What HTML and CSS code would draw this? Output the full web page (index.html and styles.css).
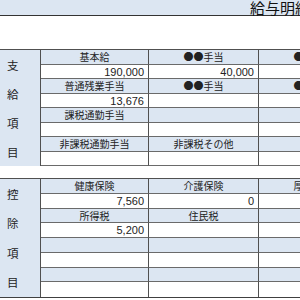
FILE: index.html
```html
<!DOCTYPE html>
<html lang="ja">
<head>
<meta charset="utf-8">
<link rel="stylesheet" href="styles.css">
</head>
<body>
<div class="sheet">
  <div class="titlebar">給与明細書</div>

  <section class="block pay">
    <div class="side"><span>支</span><span>給</span><span>項</span><span>目</span></div>
    <div class="grid">
      <div class="c h">基本給</div><div class="c h">●●手当</div><div class="c h">●●手当</div>
      <div class="c v">190,000</div><div class="c v">40,000</div><div class="c v"></div>
      <div class="c h">普通残業手当</div><div class="c h">●●手当</div><div class="c h">●●手当</div>
      <div class="c v">13,676</div><div class="c v"></div><div class="c v"></div>
      <div class="c h">課税通勤手当</div><div class="c h"></div><div class="c h"></div>
      <div class="c v"></div><div class="c v"></div><div class="c v"></div>
      <div class="c h">非課税通勤手当</div><div class="c h">非課税その他</div><div class="c h"></div>
      <div class="c v"></div><div class="c v"></div><div class="c v"></div>
    </div>
  </section>

  <section class="block deduct">
    <div class="side"><span>控</span><span>除</span><span>項</span><span>目</span></div>
    <div class="grid">
      <div class="c h">健康保険</div><div class="c h">介護保険</div><div class="c h">厚生年金</div>
      <div class="c v">7,560</div><div class="c v">0</div><div class="c v"></div>
      <div class="c h">所得税</div><div class="c h">住民税</div><div class="c h"></div>
      <div class="c v">5,200</div><div class="c v"></div><div class="c v"></div>
      <div class="c h"></div><div class="c h"></div><div class="c h"></div>
      <div class="c v"></div><div class="c v"></div><div class="c v"></div>
      <div class="c h"></div><div class="c h"></div><div class="c h"></div>
      <div class="c v"></div><div class="c v"></div><div class="c v"></div>
    </div>
  </section>
</div>
</body>
</html>
```

FILE: styles.css
```css
html, body {
  margin: 0;
  padding: 0;
  background: #ffffff;
  overflow: hidden;
}

.sheet {
  width: 420px;
  font-family: "Liberation Sans", "Noto Sans CJK JP", sans-serif;
  color: #222222;
}

.titlebar {
  height: 15px;
  background: #dce6f2;
  border-bottom: 1px solid #333333;
  padding-left: 250px;
  font-family: "Noto Sans CJK JP", sans-serif;
  font-size: 15px;
  line-height: 16px;
  white-space: nowrap;
  color: #111111;
}

.block {
  display: flex;
  border-top: 1px solid #505050;
}

.pay {
  margin-top: 33px;
}

.deduct {
  margin-top: 12px;
  border-bottom: 1px solid #404040;
}

.side {
  width: 40px;
  flex: none;
  background: #dce6f2;
  border-right: 1px solid #505050;
  display: grid;
  grid-template-rows: repeat(4, 1fr);
  align-items: center;
  padding-left: 7px;
  box-sizing: border-box;
  width: 41px;
  font-family: "Noto Sans CJK JP", sans-serif;
  font-size: 11.5px;
  line-height: 12px;
}

.grid {
  display: grid;
  grid-template-columns: 108px 110px 110px;
}

.pay .grid {
  grid-auto-rows: 14.5px;
}

.deduct .grid {
  grid-auto-rows: 14.75px;
}

.deduct .grid .c:nth-last-child(-n+3) {
  border-bottom: none;
}

.c {
  box-sizing: border-box;
  border-right: 1px solid #505050;
  border-bottom: 1px solid #6a6a6a;
  white-space: nowrap;
  overflow: hidden;
}

.h {
  background: #dce6f2;
  text-align: center;
  font-family: "Noto Sans CJK JP", sans-serif;
  font-size: 10px;
  line-height: 13px;
}

.v {
  background: #ffffff;
  text-align: right;
  padding-right: 4px;
  font-size: 11px;
  line-height: 14px;
}
```
